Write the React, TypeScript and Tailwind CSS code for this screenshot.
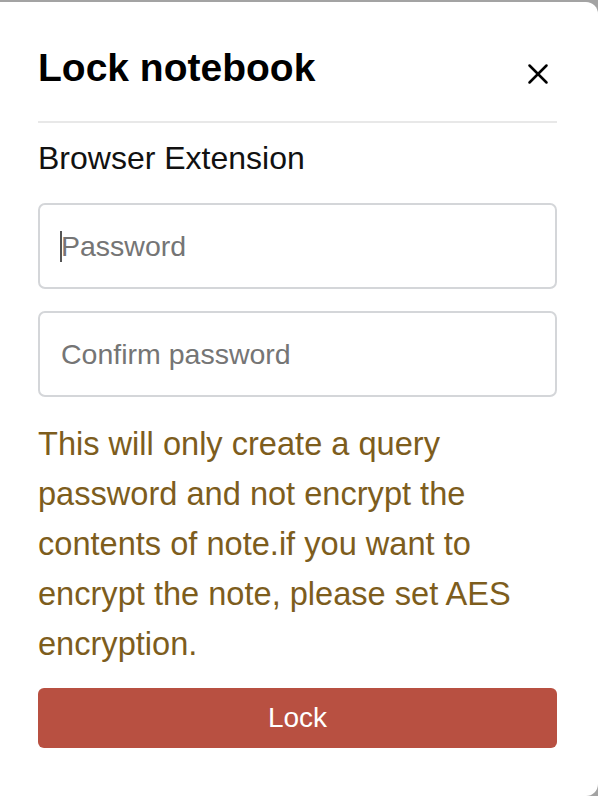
import { X } from "lucide-react";

export default function App() {
  return (
    <div className="h-[796px] w-[598px] overflow-hidden bg-[#a3a3a3] pt-[2px] font-['Liberation_Sans',Arial,sans-serif]">
      <div className="flex h-[794px] flex-col rounded-tr-[12px] rounded-br-[12px] bg-white pl-[38px] pr-[41px]">
        {/* Header */}
        <div className="flex items-start justify-between border-b-2 border-[#e8e8e8] pt-[44px] pb-[30px]">
          <h1 className="text-[39px] leading-[44px] font-bold text-black">Lock notebook</h1>
          <button className="mt-[11px] mr-[2px] text-black">
            <X size={34} strokeWidth={1.8} />
          </button>
        </div>

        <div className="mt-[15px] text-[32px] leading-[40px] text-[#111]">Browser Extension</div>

        <div className="mt-[25px] flex flex-col gap-[22px]">
          <div className="relative">
            <input
              type="password"
              placeholder="Password"
              className="h-[86px] w-full rounded-[7px] border-2 border-[#d4d6d9] px-[21px] text-[28.5px] outline-none placeholder:text-[#757575]"
            />
            <span className="absolute top-[28px] left-[22px] h-[31px] w-[2px] bg-[#555]" />
          </div>
          <input
            type="password"
            placeholder="Confirm password"
            className="h-[86px] w-full rounded-[7px] border-2 border-[#d4d6d9] px-[21px] text-[28.5px] outline-none placeholder:text-[#757575]"
          />
        </div>

        <p className="mt-[22px] text-[32.6px] leading-[50px] text-[#7d5d1d]">
          This will only create a query password and not encrypt the contents of note.if you want to encrypt the note,
          please set AES encryption.
        </p>

        <button className="mt-[19px] h-[60px] w-full rounded-[6px] bg-[#b85041] text-[28px] text-white">Lock</button>
      </div>
    </div>
  );
}
